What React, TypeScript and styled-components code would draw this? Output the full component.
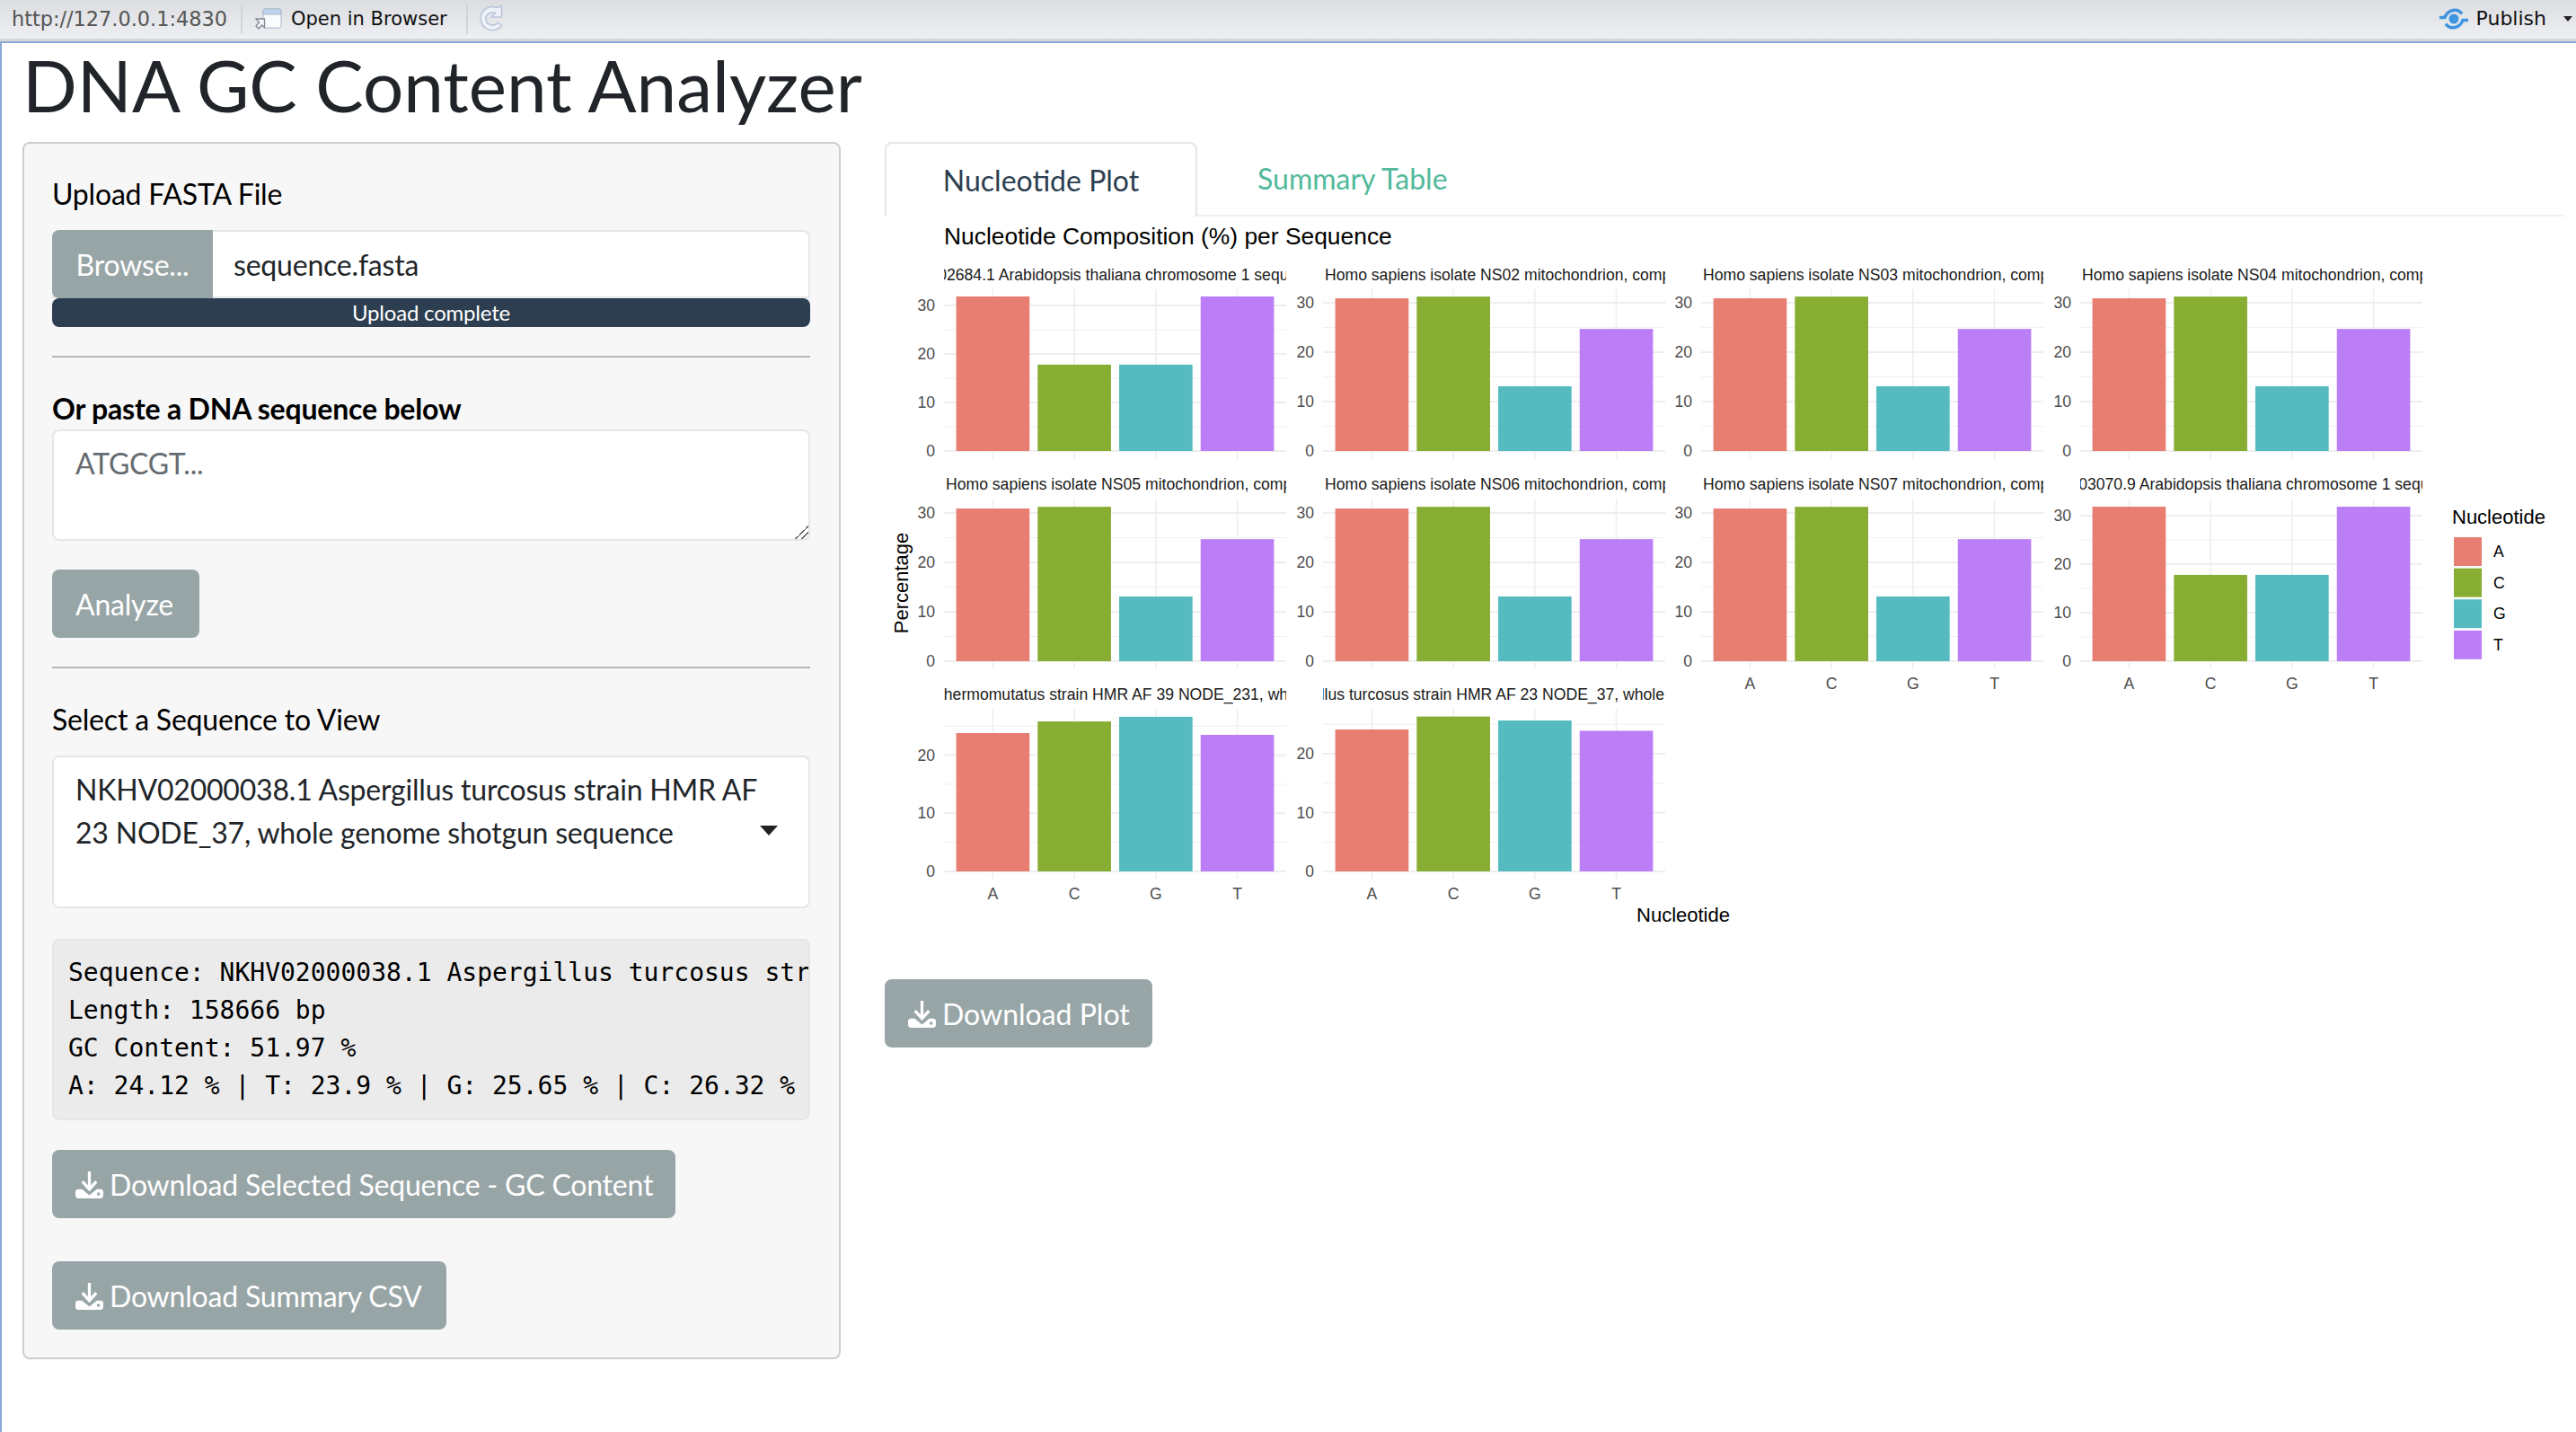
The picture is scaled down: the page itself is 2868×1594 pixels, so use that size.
import React from "react";
import styled, { createGlobalStyle } from "styled-components";

const Global = createGlobalStyle`
  html, body { margin: 0; padding: 0; background: #fff; height: 100%; overflow: hidden; }
  * { box-sizing: border-box; }
`;

const LATO = `Lato, "Liberation Sans", sans-serif`;
const HELV = `"Liberation Sans", Arial, sans-serif`;

const Page = styled.div`
  width: 2868px;
  height: 1594px;
  display: flex;
  flex-direction: column;
  font-family: ${LATO};
  color: #212529;
`;
const Toolbar = styled.header`
  height: 48px;
  flex: none;
  display: flex;
  align-items: center;
  padding: 0 4px 5px 13px;
  background: linear-gradient(#dcdde0, #eceef1 85%);
  border-bottom: 2px solid #8ca8d9;
  box-shadow: inset 0 -3px 0 #d6d7d7;
  font-family: "DejaVu Sans", sans-serif;
  font-size: 21px;
`;
const UrlText = styled.span`
  color: #555;
  width: 255px;
  font-size: 22.4px;
`;
const Sep = styled.span`
  width: 2px;
  height: 34px;
  background: #d2d4d8;
`;
const OpenText = styled.span`
  color: #111;
  margin: 0 21px 0 10px;
`;
const PublishText = styled.span`
  color: #111;
  font-size: 22px;
  margin: 0 19px 0 9px;
`;
const ToolIcon = styled.svg<{ $left?: number }>`
  flex: none;
  display: block;
  margin-left: ${(p) => p.$left ?? 0}px;
`;
const PublishGroup = styled.div`
  margin-left: auto;
  display: flex;
  align-items: center;
`;
const Content = styled.main`
  flex: 1;
  border-left: 2px solid #8ca8d9;
  padding: 0 0 0 23px;
`;
const Title = styled.h1`
  margin: 0;
  height: 110px;
  font-size: 80px;
  line-height: 92px;
  font-weight: 400;
  color: #212529;
`;
const Row = styled.div`
  display: grid;
  grid-template-columns: 911px 1fr;
  column-gap: 49px;
`;
const Sidebar = styled.aside`
  height: 1355px;
  background: #f7f7f7;
  border: 2px solid #cbcdcf;
  border-radius: 8px;
  padding: 36px 32px 0 31px;
  letter-spacing: -0.2px;
`;
const FieldLabel = styled.div<{ $bold?: boolean }>`
  font-size: 32px;
  line-height: 40px;
  font-weight: ${(p) => (p.$bold ? 700 : 400)};
  color: #000;
`;
const FileRow = styled.div`
  display: flex;
  height: 76px;
  margin-top: 20px;
  background: #fff;
  border: 2px solid #e3e6ea;
  border-radius: 8px 8px 0 0;
`;
const Browse = styled.div`
  width: 179px;
  margin: -2px 0 -2px -2px;
  background: #98a5a6;
  color: #fff;
  border-radius: 8px 0 0 8px;
  display: flex;
  align-items: center;
  justify-content: center;
  font-size: 32px;
`;
const FileName = styled.div`
  padding-left: 23px;
  font-size: 32px;
  display: flex;
  align-items: center;
  color: #212529;
`;
const Progress = styled.div`
  height: 32px;
  background: #2c3e50;
  color: #fff;
  border-radius: 8px;
  text-align: center;
  font-size: 24px;
  line-height: 32px;
`;
const Rule = styled.hr<{ $top: number; $bottom: number }>`
  border: 0;
  height: 2px;
  background: #b7b7b7;
  margin: ${(p) => p.$top}px 0 ${(p) => p.$bottom}px;
`;
const Paste = styled.textarea`
  display: block;
  width: 100%;
  height: 124px;
  margin-top: 3px;
  padding: 12px 24px;
  border: 2px solid #e3e6ea;
  border-radius: 8px;
  background: #fff;
  font-family: ${LATO};
  font-size: 32px;
  letter-spacing: -0.2px;
  line-height: 48px;
  color: #212529;
  outline: none;
  &::placeholder {
    color: #666c70;
    opacity: 1;
  }
  &::-webkit-resizer {
    background: linear-gradient(
      135deg,
      transparent 50%,
      #555 50%,
      #555 56%,
      transparent 56%,
      transparent 72%,
      #555 72%,
      #555 78%,
      transparent 78%
    );
  }
`;
const Button = styled.div<{ $top: number; $w: number }>`
  width: ${(p) => p.$w}px;
  height: 76px;
  margin-top: ${(p) => p.$top}px;
  padding: 0 0 0 26px;
  background: #98a5a6;
  color: #fff;
  border-radius: 8px;
  display: flex;
  align-items: center;
  font-size: 32px;
  gap: 7px;
`;
const SelectBox = styled.div`
  position: relative;
  height: 170px;
  margin-top: 20px;
  padding: 12px 40px 0 24px;
  background: #fff;
  border: 2px solid #e3e6ea;
  border-radius: 8px;
  font-size: 32px;
  line-height: 48px;
  color: #212529;
`;
const Caret = styled.span`
  position: absolute;
  right: 34px;
  top: 76px;
  width: 0;
  height: 0;
  border-left: 10px solid transparent;
  border-right: 10px solid transparent;
  border-top: 11px solid #222;
`;
const Output = styled.pre`
  margin: 34px 0 0;
  height: 202px;
  padding: 15px 0 0 16px;
  background: #ebebeb;
  border: 2px solid #e3e6ea;
  border-radius: 8px;
  font-family: "DejaVu Sans Mono", "Liberation Mono", monospace;
  font-size: 28px;
  letter-spacing: 0;
  line-height: 42px;
  color: #000;
  overflow: hidden;
`;
const MainCol = styled.section`
  padding-right: 14px;
`;
const Tabs = styled.nav`
  display: flex;
  height: 83px;
  border-bottom: 2px solid #eef0f1;
`;
const Tab = styled.div<{ $active?: boolean }>`
  width: ${(p) => (p.$active ? "348px" : "auto")};
  height: ${(p) => (p.$active ? "83px" : "auto")};
  padding: 0 ${(p) => (p.$active ? "0" : "67px")};
  font-size: 32px;
  line-height: 81px;
  text-align: center;
  color: ${(p) => (p.$active ? "#2c3e50" : "#52b99b")};
  background: ${(p) => (p.$active ? "#fff" : "transparent")};
  border: ${(p) => (p.$active ? "2px solid #e3e6ea" : "0")};
  border-bottom: 0;
  border-radius: 8px 8px 0 0;
`;
const ChartSvg = styled.svg`
  display: block;
  margin-top: 2px;
  font-family: ${HELV};
`;
const PlotTitle = styled.text`
  font-size: 26.4px;
  fill: #000;
`;
const StripText = styled.text`
  font-size: 17.6px;
  fill: #1a1a1a;
`;
const AxisText = styled.text`
  font-size: 17.6px;
  fill: #4d4d4d;
`;
const AxisTitle = styled.text`
  font-size: 22px;
  fill: #000;
`;
const LegendLabel = styled.text`
  font-size: 17.6px;
  fill: #000;
`;

const COLORS = ["#e87d72", "#88ad33", "#55bbc1", "#bb7ef6"];
const LETTERS = ["A", "C", "G", "T"];
const COLX = [1051, 1473, 1894, 2316];
const PW = 381;

type Facet = {
  id: string;
  label: string;
  lx: number;
  col: number;
  zero: number;
  top: number;
  scale: number;
  values: number[];
  majors: number[];
  showX?: boolean;
};

const ARA = [31.85, 17.8, 17.8, 31.85];
const HOMO = [30.9, 31.25, 13.1, 24.7];
const M3 = [30, 20, 10, 0];
const facets: Facet[] = [
  { id: "a", col: 0, zero: 502, top: 322, scale: 5.4, values: ARA, majors: M3, lx: -41, label: "CP002684.1 Arabidopsis thaliana chromosome 1 sequence" },
  { id: "b", col: 1, zero: 502, top: 322, scale: 5.5, values: HOMO, majors: M3, lx: 2, label: "Homo sapiens isolate NS02 mitochondrion, complete genome" },
  { id: "c", col: 2, zero: 502, top: 322, scale: 5.5, values: HOMO, majors: M3, lx: 2, label: "Homo sapiens isolate NS03 mitochondrion, complete genome" },
  { id: "d", col: 3, zero: 502, top: 322, scale: 5.5, values: HOMO, majors: M3, lx: 2, label: "Homo sapiens isolate NS04 mitochondrion, complete genome" },
  { id: "e", col: 0, zero: 736, top: 555, scale: 5.5, values: HOMO, majors: M3, lx: 2, label: "Homo sapiens isolate NS05 mitochondrion, complete genome" },
  { id: "f", col: 1, zero: 736, top: 555, scale: 5.5, values: HOMO, majors: M3, lx: 2, label: "Homo sapiens isolate NS06 mitochondrion, complete genome" },
  { id: "g", col: 2, zero: 736, top: 555, scale: 5.5, values: HOMO, majors: M3, lx: 2, showX: true, label: "Homo sapiens isolate NS07 mitochondrion, complete genome" },
  { id: "h", col: 3, zero: 736, top: 555, scale: 5.4, values: ARA, majors: M3, lx: -36, showX: true, label: "CP003070.9 Arabidopsis thaliana chromosome 1 sequence" },
  { id: "i", col: 0, zero: 970, top: 789, scale: 6.47, values: [23.8, 25.8, 26.6, 23.5], majors: [20, 10, 0], lx: -96, showX: true, label: "Aspergillus thermomutatus strain HMR AF 39 NODE_231, whole genome" },
  { id: "j", col: 1, zero: 970, top: 789, scale: 6.55, values: [24.12, 26.32, 25.65, 23.9], majors: [20, 10, 0], lx: -62, showX: true, label: "Aspergillus turcosus strain HMR AF 23 NODE_37, whole genome" },
];

const FacetPlot = ({ f }: { f: Facet }) => {
  const x0 = COLX[f.col];
  const unit = PW / 4.2;
  const centers = [0, 1, 2, 3].map((i) => x0 + unit * (0.6 + i));
  const maxVal = Math.ceil((f.zero - f.top) / f.scale / 5) * 5;
  const minors: number[] = [];
  for (let v = 5; v < maxVal; v += 10) minors.push(v);
  return (
    <g>
      <clipPath id={`clip-${f.id}`}>
        <rect x={x0} y={290} width={PW} height={900} />
      </clipPath>
      <StripText x={x0 + f.lx} y={f.top - 16} dominantBaseline="central" clipPath={`url(#clip-${f.id})`}>
        {f.label}
      </StripText>
      {minors.map((v) =>
        f.zero - v * f.scale > f.top ? (
          <line key={v} x1={x0} x2={x0 + PW} y1={f.zero - v * f.scale} y2={f.zero - v * f.scale} stroke="#f0f0f0" strokeWidth={1} />
        ) : null
      )}
      {f.majors.map((v) => (
        <line key={v} x1={x0} x2={x0 + PW} y1={f.zero - v * f.scale} y2={f.zero - v * f.scale} stroke="#eeeeee" strokeWidth={2} />
      ))}
      {centers.map((c) => (
        <line key={c} x1={c} x2={c} y1={f.top} y2={f.zero + 9} stroke="#eeeeee" strokeWidth={1.5} />
      ))}
      {f.values.map((v, i) => (
        <rect key={i} x={centers[i] - unit * 0.45} y={f.zero - v * f.scale} width={unit * 0.9} height={v * f.scale} fill={COLORS[i]} />
      ))}
      {f.majors.map((v) => (
        <AxisText key={v} x={x0 - 10} y={f.zero - v * f.scale} textAnchor="end" dominantBaseline="central">
          {v}
        </AxisText>
      ))}
      {f.showX &&
        LETTERS.map((l, i) => (
          <AxisText key={l} x={centers[i]} y={f.zero + 25} textAnchor="middle" dominantBaseline="central">
            {l}
          </AxisText>
        ))}
    </g>
  );
};

const Chart = () => (
  <ChartSvg width={1870} height={820} viewBox="985 243 1870 820">
    <PlotTitle x={1051} y={263} dominantBaseline="central">
      Nucleotide Composition (%) per Sequence
    </PlotTitle>
    <AxisTitle x={1003} y={649} textAnchor="middle" dominantBaseline="central" transform="rotate(-90 1003 649)">
      Percentage
    </AxisTitle>
    <AxisTitle x={1874} y={1018} textAnchor="middle" dominantBaseline="central">
      Nucleotide
    </AxisTitle>
    {facets.map((f) => (
      <FacetPlot key={f.id} f={f} />
    ))}
    <AxisTitle x={2730} y={575} dominantBaseline="central">
      Nucleotide
    </AxisTitle>
    {LETTERS.map((l, i) => (
      <g key={l}>
        <rect x={2732} y={598 + i * 34.6} width={31} height={32} fill={COLORS[i]} />
        <LegendLabel x={2776} y={614 + i * 34.6} dominantBaseline="central">
          {l}
        </LegendLabel>
      </g>
    ))}
  </ChartSvg>
);

const DownloadIcon = () => (
  <svg width="31" height="31" viewBox="0 0 32 32" aria-hidden="true">
    <path d="M16 1v20M8 12.500l8 9 8-9" fill="none" stroke="#fff" strokeWidth="3.400" />
    <path d="M3 21.500h4.500l8.500 7 8.500-7H29c1.600 0 3 1.400 3 3V29c0 1.600-1.400 3-3 3H3c-1.600 0-3-1.400-3-3v-4.500c0-1.600 1.400-3 3-3z" fill="#fff" />
    <circle cx="26.500" cy="26.800" r="1.800" fill="#98a5a6" />
  </svg>
);

const DownloadButton = ({ w, top, children }: { w: number; top: number; children: React.ReactNode }) => (
  <Button $w={w} $top={top}>
    <DownloadIcon />
    {children}
  </Button>
);

export default function App() {
  return (
    <Page>
      <Global />
      <Toolbar>
        <UrlText>http://127.0.0.1:4830</UrlText>
        <Sep />
        <ToolIcon width="30" height="24" viewBox="0 0 30 24" $left={14}>
          <rect x="9" y="1" width="20" height="21" rx="2.500" fill="#fafbfc" stroke="#a9b6c8" />
          <path d="M9 7V3.500A2.500 2.500 0 0 1 11.500 1h15A2.500 2.500 0 0 1 29 3.500V7z" fill="#bdd3ef" stroke="#a9b6c8" />
          <path d="M1 12h9.500v9.500l-3-2.500L4 23l-3-3 3.500-4z" fill="#f4f6f8" stroke="#7d8794" strokeWidth="1.300" />
        </ToolIcon>
        <OpenText>Open in Browser</OpenText>
        <Sep />
        <ToolIcon width="30" height="30" viewBox="0 0 30 30" $left={13}>
          <path d="M24.500 22.500A13 13 0 1 1 19 2.500l5.500-1.800V13H13l4.700-4.300A7.200 7.200 0 1 0 20 19z" fill="#eef2f8" stroke="#b6c4da" strokeWidth="1.500" strokeLinejoin="round" />
        </ToolIcon>
        <PublishGroup>
          <ToolIcon width="32" height="24" viewBox="0 0 32 24">
            <circle cx="16" cy="12" r="5.500" fill="#4095e0" />
            <path d="M0 10.500h6C9 2 20-1 25 6.500" fill="none" stroke="#4095e0" strokeWidth="3.500" />
            <path d="M32 13.500h-6C23 22 12 25 7 17.500" fill="none" stroke="#4095e0" strokeWidth="3.500" />
          </ToolIcon>
          <PublishText>Publish</PublishText>
          <ToolIcon width="10" height="6" viewBox="0 0 10 6">
            <path d="M0 0h10L5 6z" fill="#222" />
          </ToolIcon>
        </PublishGroup>
      </Toolbar>
      <Content>
        <Title>DNA GC Content Analyzer</Title>
        <Row>
          <Sidebar>
            <FieldLabel>Upload FASTA File</FieldLabel>
            <FileRow>
              <Browse>Browse...</Browse>
              <FileName>sequence.fasta</FileName>
            </FileRow>
            <Progress>Upload complete</Progress>
            <Rule $top={32} $bottom={37} />
            <FieldLabel $bold>Or paste a DNA sequence below</FieldLabel>
            <Paste placeholder="ATGCGT..." readOnly />
            <Button $w={164} $top={32}>Analyze</Button>
            <Rule $top={32} $bottom={37} />
            <FieldLabel>Select a Sequence to View</FieldLabel>
            <SelectBox>
              NKHV02000038.1 Aspergillus turcosus strain HMR AF 23 NODE_37, whole genome shotgun sequence
              <Caret />
            </SelectBox>
            <Output>{`Sequence: NKHV02000038.1 Aspergillus turcosus strain HMR AF 23 NODE_37
Length: 158666 bp
GC Content: 51.97 %
A: 24.12 % | T: 23.9 % | G: 25.65 % | C: 26.32 %`}</Output>
            <DownloadButton w={694} top={33}>Download Selected Sequence - GC Content</DownloadButton>
            <DownloadButton w={439} top={48}>Download Summary CSV</DownloadButton>
          </Sidebar>
          <MainCol>
            <Tabs>
              <Tab $active>Nucleotide Plot</Tab>
              <Tab>Summary Table</Tab>
            </Tabs>
            <Chart />
            <DownloadButton w={298} top={27}>Download Plot</DownloadButton>
          </MainCol>
        </Row>
      </Content>
    </Page>
  );
}
